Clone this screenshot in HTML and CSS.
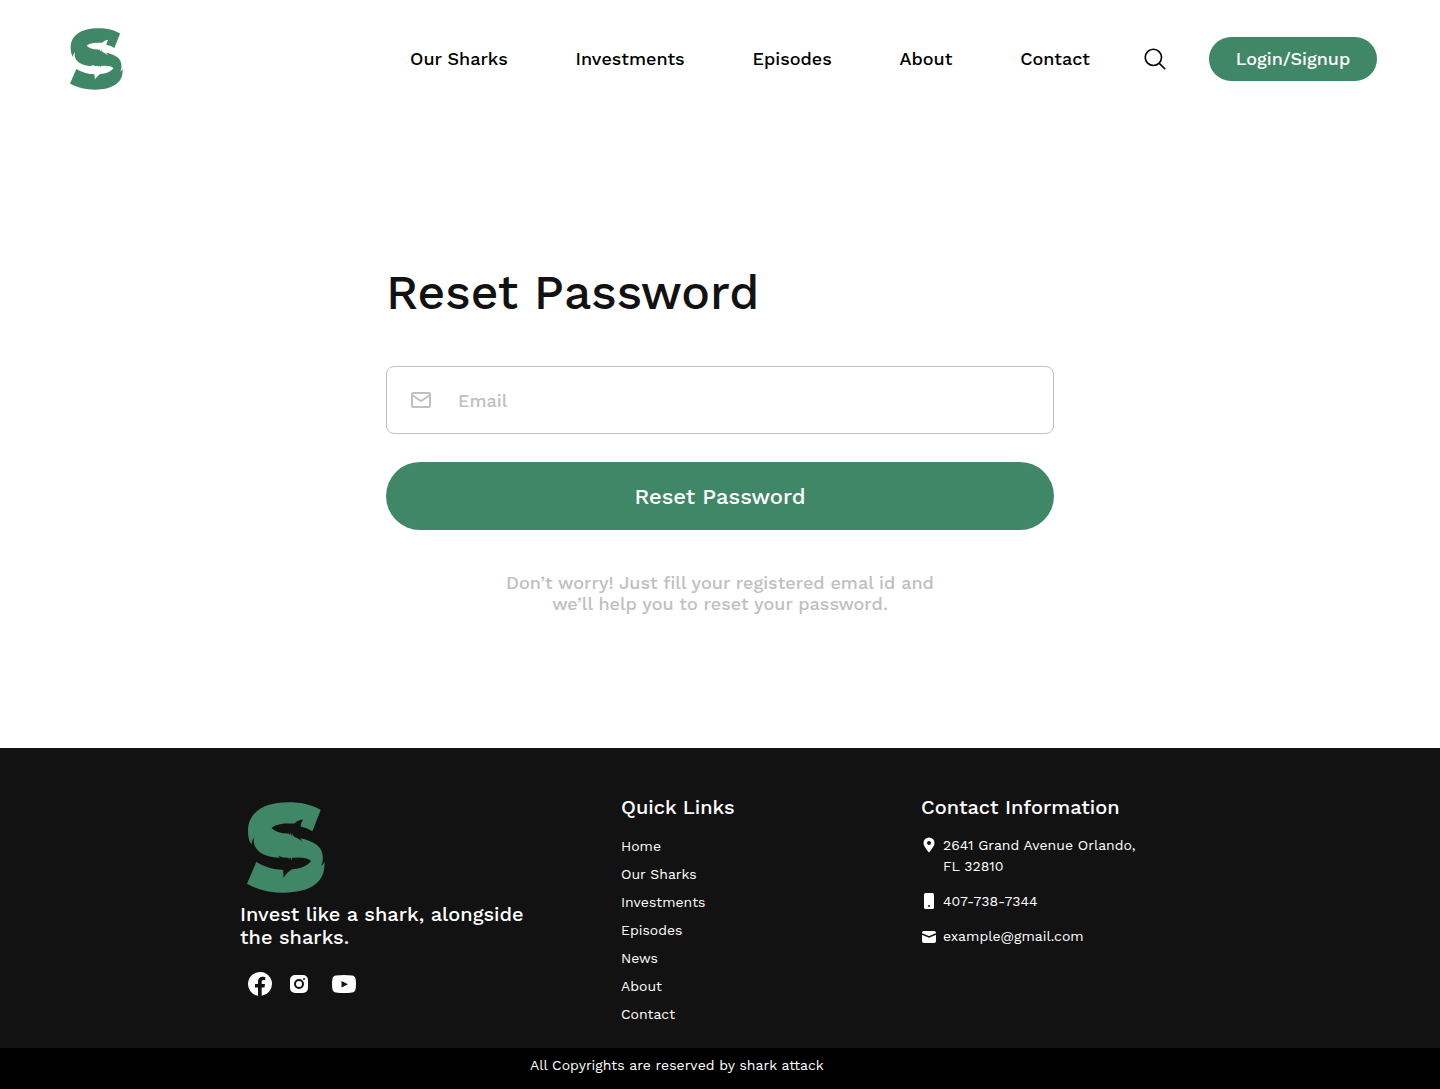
FILE: index.html
```html
<!DOCTYPE html>
<html lang="en">
<head>
<meta charset="utf-8">
<meta name="viewport" content="width=device-width, initial-scale=1">
<title>Reset Password</title>
<link rel="stylesheet" href="styles.css">
</head>
<body>
<svg class="sprite" aria-hidden="true">
  <symbol id="logo" viewBox="33 20 235 272">
    <path d="M255 43C228 28 198 20 158 20C84 20 36 50 36 105C36 124 39 136 47 148Q45 136 55 126Q51 137 56 150C66 174 92 186 133 187L126 180L141 186L158 187L160 194L161 187L165 187L167 196L169 187L187 186Q217 186 226 197C212 214 190 221 167 222Q152 231 143 247L142 224Q96 222 61 200L33 265C66 284 103 292 145 292C218 292 263 264 266 215L267 200Q263 207 256 212Q263 201 261 180C258 154 240 138 194 128Q196 133 201 141Q193 131 180 126L173 122L171 113L169 121L167 120L165 111L163 118L159 114Q120 113 107 97C123 83 149 84 176 84Q184 74 202 71Q196 81 194 93Q214 96 230 107Z"/>
  </symbol>
</svg>
<header class="header">
  <a class="brand" href="#" aria-label="Home"><svg class="brand-logo"><use href="#logo"/></svg></a>
  <nav class="nav" aria-label="Main">
    <a href="#">Our Sharks</a>
    <a href="#">Investments</a>
    <a href="#">Episodes</a>
    <a href="#">About</a>
    <a href="#">Contact</a>
  </nav>
  <button class="search" type="button" aria-label="Search">
    <svg viewBox="0 0 24 24"><circle cx="10.500" cy="10.500" r="7.500"/><path d="M16 16l5 5"/></svg>
  </button>
  <button class="login" type="button">Login/Signup</button>
</header>
<main class="main">
  <form class="reset">
    <h1>Reset Password</h1>
    <label class="field">
      <svg viewBox="0 0 24 24" aria-hidden="true"><rect x="3" y="5" width="18" height="14" rx="1"/><path d="M3 7l9 6 9-6"/></svg>
      <input type="email" placeholder="Email" aria-label="Email">
    </label>
    <button class="submit" type="submit">Reset Password</button>
    <p>Don’t worry! Just fill your registered emal id and<br>we’ll help you to reset your password.</p>
  </form>
</main>
<footer class="footer">
  <div class="columns">
    <section class="about">
      <svg class="footer-logo" aria-hidden="true"><use href="#logo"/></svg>
      <p>Invest like a shark, alongside<br>the sharks.</p>
      <div class="social">
        <a href="#" aria-label="Facebook"><svg width="24" height="24" viewBox="0 0 24 24"><path d="M24 12A12 12 0 1 0 10 23.850V15.500H7V12h3V9.400C10 6.400 11.800 4.700 14.500 4.700c1.300 0 2.700.3 2.700.3v2.900h-1.500c-1.500 0-2 .9-2 1.900V12H17l-.5 3.500h-2.800v8.350A12 12 0 0 0 24 12z"/></svg></a>
        <a class="instagram" href="#" aria-label="Instagram"><svg width="18" height="18" viewBox="0 0 18 18"><rect width="18" height="18" rx="5"/><circle class="ring" cx="9" cy="9" r="4"/><circle class="dot" cx="14" cy="4" r="1"/></svg></a>
        <a href="#" aria-label="YouTube"><svg width="24" height="18" viewBox="0 0 24 18"><path d="M4 .5Q12-.5 20 .5Q23 .7 23.600 4Q24.400 9 23.600 14Q23 17.300 20 17.500Q12 18.500 4 17.500Q1 17.300.4 14Q-.4 9 .4 4Q1 .7 4 .5z"/><path class="dot" d="M9.500 6v6.500L16 9.250z"/></svg></a>
      </div>
    </section>
    <nav class="links" aria-labelledby="quick">
      <h2 id="quick">Quick Links</h2>
      <a href="#">Home</a>
      <a href="#">Our Sharks</a>
      <a href="#">Investments</a>
      <a href="#">Episodes</a>
      <a href="#">News</a>
      <a href="#">About</a>
      <a href="#">Contact</a>
    </nav>
    <section class="contact">
      <h2>Contact Information</h2>
      <ul>
        <li><svg viewBox="0 0 16 16" aria-hidden="true"><path d="M8 .5A5.500 5.500 0 0 0 2.500 6C2.500 9.500 8 15.500 8 15.500S13.500 9.500 13.500 6A5.500 5.500 0 0 0 8 .5z"/><circle class="dot" cx="8" cy="6" r="2"/></svg><span>2641 Grand Avenue Orlando,<br>FL 32810</span></li>
        <li><svg viewBox="0 0 16 16" aria-hidden="true"><rect x="3" width="10" height="16" rx="1.500"/><circle class="dot" cx="8" cy="13" r="1"/></svg><span>407-738-7344</span></li>
        <li><svg viewBox="0 0 16 16" aria-hidden="true"><rect x="1" y="3" width="14" height="12" rx="2"/><path class="fold" d="M1 6l7 3 7-3"/></svg><a href="mailto:example@gmail.com">example@gmail.com</a></li>
      </ul>
    </section>
  </div>
  <div class="copyright"><p>All Copyrights are reserved by shark attack</p></div>
</footer>
</body>
</html>
```
FILE: styles.css
```css
* {
  box-sizing: border-box;
}

body {
  margin: 0;
  min-height: 100vh;
  display: flex;
  flex-direction: column;
  background: #fff;
  color: #121212;
  font-family: "Work Sans", Inter, sans-serif;
  font-size: 18px;
  font-weight: 500;
}

h1,
h2,
p,
ul {
  margin: 0;
  padding: 0;
  list-style: none;
}

h1,
h2 {
  font-weight: 500;
}

a {
  color: inherit;
  text-decoration: none;
}

button,
input {
  font: inherit;
  border: 0;
  padding: 0;
  background: none;
}

button {
  cursor: pointer;
}

svg {
  display: block;
  flex: none;
  fill: currentColor;
}

.sprite {
  display: none;
}

.header {
  display: flex;
  align-items: center;
  height: 118px;
  padding: 0 63px 0 70px;
  color: #000;
  line-height: 20px;
}

.brand {
  margin-right: auto;
  color: #408767;
}

.brand-logo {
  width: 53px;
  height: 62px;
}

.nav {
  display: flex;
  flex: 0 1 680px;
  justify-content: space-between;
  gap: 24px;
  white-space: nowrap;
}

.search {
  margin: 0 41px 0 52px;
  color: #000;
}

.search svg {
  width: 26px;
  height: 26px;
  fill: none;
  stroke: currentColor;
  stroke-width: 1.5;
  stroke-linecap: round;
}

.login {
  width: 168px;
  height: 44px;
  border-radius: 22px;
  background: #408767;
  color: #fff;
  line-height: 20px;
}

.main {
  flex: 1;
  padding: 144px 24px 132px;
}

.reset {
  display: flex;
  flex-direction: column;
  max-width: 668px;
  margin: 0 auto;
}

.reset h1 {
  margin-bottom: 42px;
  font-size: 48px;
  line-height: 62px;
}

.field {
  display: flex;
  align-items: center;
  gap: 25px;
  height: 68px;
  padding: 0 22px;
  border: 1px solid #c0c0c0;
  border-radius: 8px;
  color: #c0c0c0;
}

.field svg {
  width: 24px;
  height: 24px;
  fill: none;
  stroke: currentColor;
  stroke-width: 2;
}

.field input {
  flex: 1;
  min-width: 0;
  height: 100%;
  color: #121212;
  outline: none;
}

.field input::placeholder {
  color: #c0c0c0;
  opacity: 1;
}

.submit {
  height: 68px;
  margin: 28px 0 42px;
  border-radius: 34px;
  background: #408767;
  color: #fff;
  font-size: 22px;
}

.reset p {
  color: #c0c0c0;
  line-height: 21px;
  text-align: center;
}

.footer {
  background: #121212;
  color: #fff;
  font-size: 14px;
  font-weight: 400;
}

.columns {
  display: grid;
  grid-template-columns: 381px 300px 1fr;
  max-width: 1008px;
  min-height: 300px;
  margin: 0 auto;
  padding: 46px 24px 20px;
}

.footer-logo {
  width: 78px;
  height: 91px;
  margin: 8px 0 10px 7px;
  color: #408767;
}

.about p {
  font-size: 20px;
  font-weight: 500;
  line-height: 23px;
}

.social {
  display: flex;
  align-items: center;
  gap: 18px;
  margin: 23px 0 0 8px;
}

.instagram {
  margin-right: 6px;
}

.ring {
  fill: none;
  stroke: #121212;
  stroke-width: 2;
}

.dot {
  fill: #121212;
}

.fold {
  fill: none;
  stroke: #121212;
  stroke-width: 1.5;
}

.footer h2 {
  margin-bottom: 12px;
  font-size: 20px;
  line-height: 26px;
}

.links {
  display: flex;
  flex-direction: column;
  align-items: flex-start;
  line-height: 28px;
}

.contact ul {
  display: grid;
  gap: 14px;
  padding-top: 3px;
  line-height: 21px;
}

.contact li {
  display: flex;
  gap: 6px;
}

.contact svg {
  width: 16px;
  height: 16px;
  margin-top: 2px;
}

.copyright {
  height: 41px;
  background: #000;
  line-height: 35px;
}

.copyright p {
  max-width: 1008px;
  margin: 0 auto;
  padding-left: 314px;
}
```
